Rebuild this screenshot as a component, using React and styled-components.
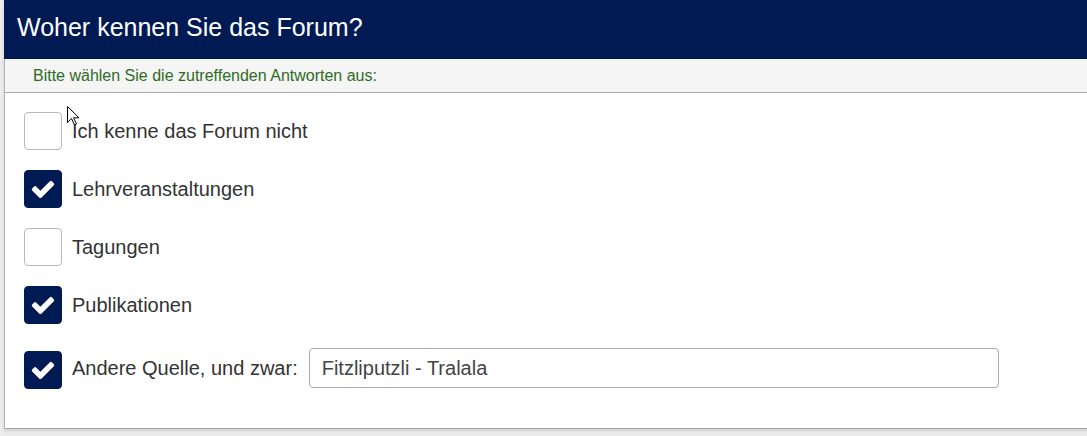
import React from "react";
import styled, { createGlobalStyle } from "styled-components";

const GlobalStyle = createGlobalStyle`
  html, body {
    margin: 0;
    padding: 0;
    background: #ececec;
    font-family: "Liberation Sans", Arial, sans-serif;
    overflow: hidden;
  }
`;

const Page = styled.div`
  width: 1087px;
  height: 436px;
  position: relative;
  overflow: hidden;
`;

const Panel = styled.section`
  margin-left: 4px;
  width: 1100px;
  background: #fff;
  border-left: 1px solid #b4b4b4;
  border-bottom: 1px solid #a8a8a8;
  box-shadow: 0 2px 3px rgba(0, 0, 0, 0.12);
`;

const Header = styled.h2`
  margin: 0 0 0 -1px;
  height: 59px;
  box-sizing: border-box;
  padding: 13px 0 0 13px;
  background: #001a54;
  color: #fff;
  font-size: 25px;
  font-weight: normal;
  line-height: 29px;
`;

const Hint = styled.div`
  height: 34px;
  box-sizing: border-box;
  padding: 8px 0 0 28px;
  background: #f5f5f5;
  border-bottom: 1px solid #a9a9a9;
  color: #2f6b25;
  font-size: 16px;
  line-height: 18px;
`;

const Options = styled.div`
  display: flex;
  flex-direction: column;
  gap: 20px;
  padding: 19px 0 38px 19px;
`;

const Row = styled.label`
  display: flex;
  align-items: center;
  gap: 10px;
  height: ${(p) => (p.$tall ? "44px" : "38px")};
  margin-top: ${(p) => (p.$tall ? "2px" : "0")};
  color: #333;
  font-size: 20px;
  line-height: 24px;
`;

const Box = styled.span`
  width: 38px;
  height: 38px;
  box-sizing: border-box;
  flex: none;
  display: flex;
  align-items: center;
  justify-content: center;
  border-radius: 4px;
  border: 1px solid ${(p) => (p.$checked ? "#001a54" : "#b9b9b9")};
  background: ${(p) => (p.$checked ? "#001a54" : "#fff")};
  color: #fff;
  margin-top: ${(p) => (p.$offset ? "4px" : "0")};
`;

const CheckIcon = styled.svg`
  width: 26px;
  height: 26px;
  display: block;
`;

const LabelText = styled.span`
  white-space: nowrap;
`;

const TextInput = styled.input`
  margin-left: 1px;
  width: 690px;
  height: 40px;
  box-sizing: border-box;
  border: 1px solid #ababab;
  border-radius: 4px;
  padding: 0 12px;
  font-family: "Liberation Sans", Arial, sans-serif;
  font-size: 20px;
  color: #444;
  background: #fff;
  outline: none;
`;

const Cursor = styled.svg`
  position: absolute;
  left: 67px;
  top: 106px;
  width: 13px;
  height: 20px;
`;

const Check = () => (
  <CheckIcon viewBox="0 0 1792 1792">
    <path
      fill="currentColor"
      d="M1671 566q0 40-28 68l-724 724-136 136q-28 28-68 28t-68-28l-136-136-362-362q-28-28-28-68t28-68l136-136q28-28 68-28t68 28l294 295 656-657q28-28 68-28t68 28l136 136q28 28 28 68z"
    />
  </CheckIcon>
);

const options = [
  { label: "Ich kenne das Forum nicht", checked: false },
  { label: "Lehrveranstaltungen", checked: true },
  { label: "Tagungen", checked: false },
  { label: "Publikationen", checked: true },
];

export default function App() {
  return (
    <Page>
      <GlobalStyle />
      <Panel>
        <Header>Woher kennen Sie das Forum?</Header>
        <Hint>Bitte wählen Sie die zutreffenden Antworten aus:</Hint>
        <Options>
          {options.map((o) => (
            <Row key={o.label}>
              <Box $checked={o.checked}>{o.checked && <Check />}</Box>
              <LabelText>{o.label}</LabelText>
            </Row>
          ))}
          <Row $tall>
            <Box $checked $offset>
              <Check />
            </Box>
            <LabelText>Andere Quelle, und zwar:</LabelText>
            <TextInput defaultValue="Fitzliputzli - Tralala" />
          </Row>
        </Options>
      </Panel>
      <Cursor viewBox="0 0 13 20">
        <path
          d="M0.5 0.5 L0.5 16.5 L4.5 12.5 L7.5 19 L9.5 18 L6.5 11.8 L12 11.8 Z"
          fill="#fff"
          stroke="#000"
          strokeWidth="1"
          strokeLinejoin="miter"
        />
      </Cursor>
    </Page>
  );
}
